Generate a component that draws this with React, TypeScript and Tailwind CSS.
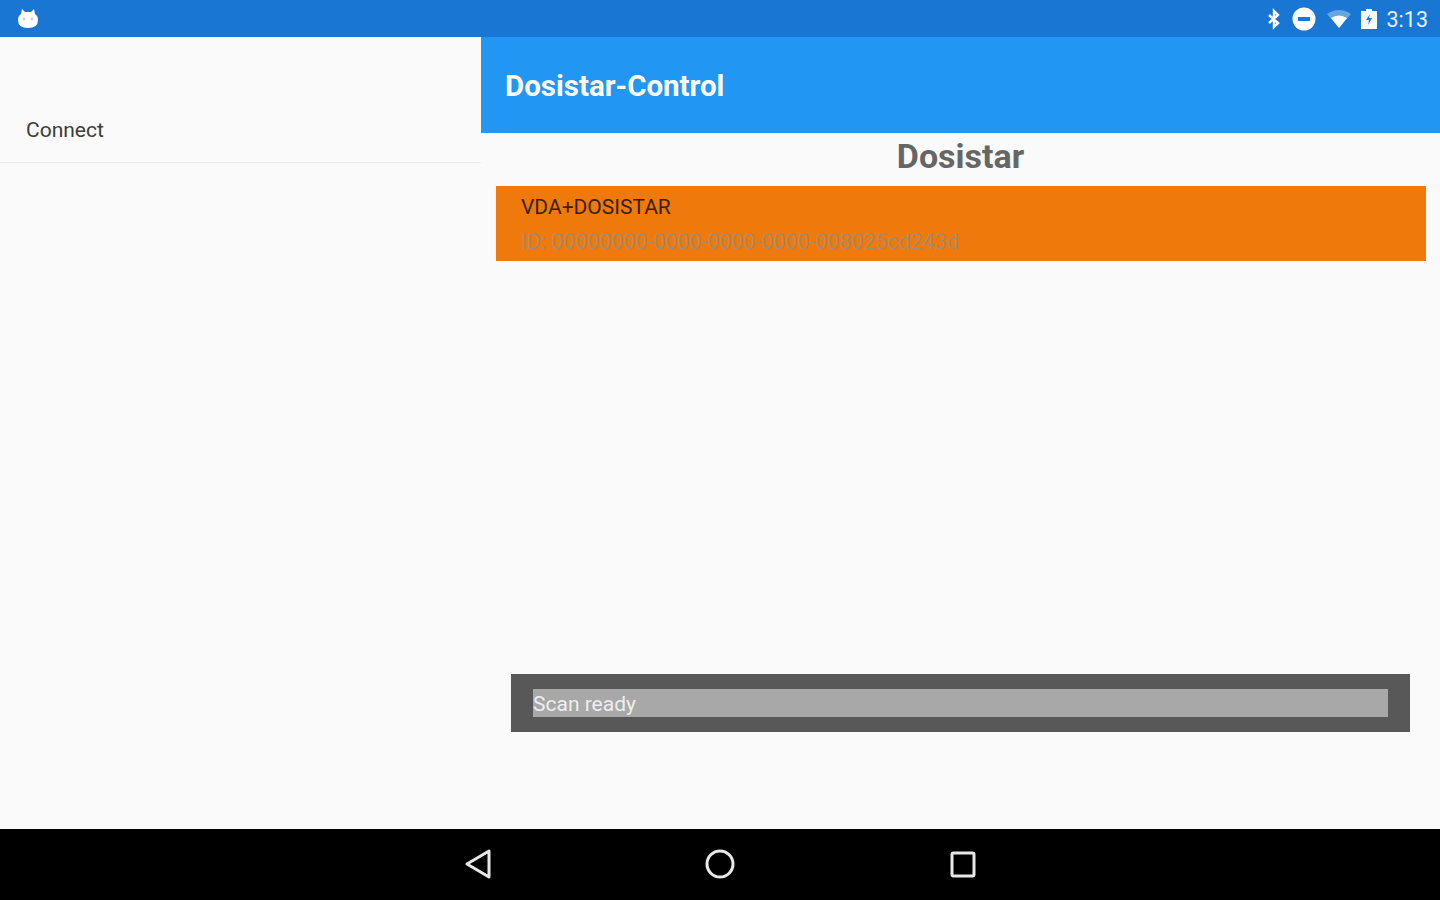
const font = "font-['Roboto',sans-serif]";

function StatusIcons() {
  return (
    <div className="flex items-center">
      <svg width="16" height="24" viewBox="0 0 16 24" className="mr-[10px]" fill="none" stroke="white" strokeWidth="2.4">
        <path d="M3 8 L12 16 L8 20 V4 L12 8 L3 16" />
      </svg>
      <svg width="24" height="24" viewBox="0 0 24 24" className="mr-[11px]">
        <circle cx="12" cy="12" r="11.5" fill="white" />
        <rect x="6" y="10" width="12" height="4" fill="#1976d2" />
      </svg>
      <svg width="24" height="20" viewBox="0 0 24 20" className="mr-[10px]">
        <path d="M0 5 Q12 -3 24 5 L12 19 Z" fill="white" fillOpacity="0.35" />
        <path d="M4 9 Q12 4 20 9 L12 19 Z" fill="white" />
      </svg>
      <svg width="16" height="20" viewBox="0 0 16 20" className="mr-[10px]">
        <path d="M5 0 H11 V2 H16 V20 H0 V2 H5 Z" fill="white" />
        <path d="M9 5 L5 11 H8 L7 16 L11 9 H8 Z" fill="#1976d2" />
      </svg>
      <span className="mt-[2px] text-[21.5px] leading-none text-white/90">3:13</span>
    </div>
  );
}

export default function App() {
  return (
    <div className={`flex h-[900px] w-[1440px] flex-col overflow-hidden bg-[#fafafa] ${font}`}>
      <div className="flex h-[37px] items-center justify-between bg-[#1976d2] pl-[17px] pr-[12px]">
        <svg width="22" height="22" viewBox="0 0 22 22">
          <path d="M5 1 L8 4 H14 L17 1 L18 6 Q21 8 21 12 Q21 20 11 20 Q1 20 1 12 Q1 8 4 6 Z" fill="white" />
          <circle cx="7" cy="11" r="1.4" fill="#b9d5f0" />
          <circle cx="15" cy="11" r="1.4" fill="#b9d5f0" />
        </svg>
        <StatusIcons />
      </div>

      <div className="flex flex-1">
        <aside className="w-[481px]">
          <div className="flex h-[126px] items-end border-b border-[#ececec] pb-[19px] pl-[26px]">
            <span className="text-[21px] leading-[25px] text-[#3c3c3c]">Connect</span>
          </div>
        </aside>

        <main className="flex flex-1 flex-col">
          <header className="flex h-[96px] items-center bg-[#2196f3] pl-[24px] pt-[3px]">
            <h1 className="text-[29.5px] font-bold text-white">Dosistar-Control</h1>
          </header>

          <h2 className="mt-[4px] text-center text-[34px] font-bold leading-[38px] text-[#666666]">Dosistar</h2>

          <div className="mx-[14.5px] mt-[11px] flex h-[74.5px] flex-col bg-[#ef790b] pl-[25.5px]">
            <span className="mt-[9px] text-[21px] leading-[25px] text-[#3a2208]">VDA+DOSISTAR</span>
            <span className="mt-[9px] text-[21.4px] leading-[25px] text-[#ab8a63]">
              ID: 00000000-0000-0000-0000-008025cd243d
            </span>
          </div>

          <div className="mx-[30px] mt-[413.5px] flex h-[58px] items-center bg-[#585858] px-[22px]">
            <div className="flex h-[28px] w-full items-center bg-[#a8a8a8] pt-[2px]">
              <span className="text-[21px] leading-none text-[#eeeeee]">Scan ready</span>
            </div>
          </div>
        </main>
      </div>

      <nav className="flex h-[71px] items-center justify-center gap-[192px] bg-black pb-[2px]">
        <svg width="50" height="36" viewBox="0 0 50 36" fill="none" stroke="#e8e8e8" strokeWidth="3" strokeLinejoin="round">
          <path d="M36 5 V31 L14 18 Z" />
        </svg>
        <svg width="50" height="36" viewBox="0 0 50 36" fill="none" stroke="#e8e8e8" strokeWidth="3">
          <circle cx="25" cy="18" r="13" />
        </svg>
        <svg width="50" height="36" viewBox="0 0 50 36" fill="none" stroke="#e8e8e8" strokeWidth="3" strokeLinejoin="round">
          <rect x="15" y="7" width="22" height="23" rx="1.5" />
        </svg>
      </nav>
    </div>
  );
}
